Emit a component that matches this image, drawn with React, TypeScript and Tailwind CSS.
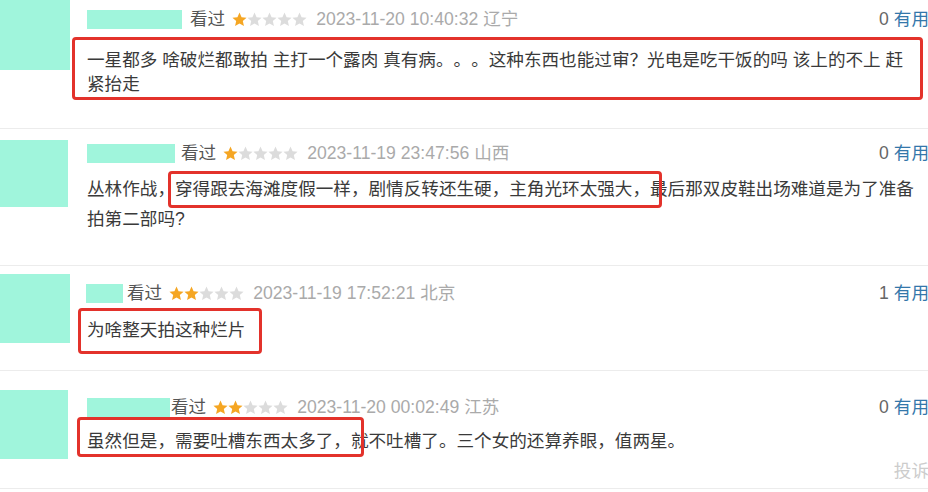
import React from "react";

const FONT = { fontFamily: '"Liberation Sans", Arial, "Noto Sans CJK SC", sans-serif' };

function Star({ on }: { on: boolean }) {
  return (
    <svg width="15" height="15" viewBox="0 0 24 24" className="block">
      <path
        d="M12 0.8l3.3 7.4 8 .8-6 5.4 1.8 7.9L12 18.2l-7.1 4.1 1.8-7.9-6-5.4 8-.8z"
        fill={on ? "#f5a623" : "#dcdcdc"}
      />
    </svg>
  );
}

function Stars({ n }: { n: number }) {
  return (
    <span className="flex items-center">
      {[0, 1, 2, 3, 4].map((i) => (
        <Star key={i} on={i < n} />
      ))}
    </span>
  );
}

function Header({
  nameW,
  nameGap,
  stars,
  date,
  place,
  useful,
}: {
  nameW: number;
  nameGap: string;
  stars: number;
  date: string;
  place: string;
  useful: number;
}) {
  return (
    <div className="flex h-[24px] items-center leading-[24px] whitespace-nowrap">
      <span className="h-[19px] bg-[#a0f5dc]" style={{ width: nameW }} />
      <span className={`${nameGap} text-[#555]`}>看过</span>
      <span className="ml-[7px]">
        <Stars n={stars} />
      </span>
      <span className="ml-[9px] text-[#aaaaaa]">
        {date} {place}
      </span>
      <span className="ml-auto -mr-[1px]">
        <span className="text-[#666]">{useful}</span>{" "}
        <span className="text-[#3377aa]">有用</span>
      </span>
    </div>
  );
}

export default function App() {
  return (
    <div
      className="relative h-[492px] w-[928px] overflow-hidden bg-white text-[17.6px] text-[#3a3a3a] [text-spacing-trim:space-all]"
      style={FONT}
    >
      {/* Row 1 */}
      <div className="relative flex h-[129px] border-b border-[#ececec]">
        <div className="w-[87px] shrink-0">
          <div className="h-[70px] w-[70px] bg-[#a0f5dc]" />
        </div>
        <div className="flex-1 pt-[7px]">
          <Header nameW={95} nameGap="ml-[8px]" stars={1} date="2023-11-20 10:40:32" place="辽宁" useful={0} />
          <div className="mt-[17px] leading-[24px] whitespace-nowrap">
            <div>一星都多 啥破烂都敢拍 主打一个露肉 真有病。。。这种东西也能过审？光电是吃干饭的吗 该上的不上 赶</div>
            <div>紧抬走</div>
          </div>
        </div>
        <div className="absolute left-[72px] top-[37px] h-[63px] w-[851px] rounded-[4px] border-[3px] border-[#e3322b]" />
      </div>

      {/* Row 2 */}
      <div className="relative flex h-[137px] border-b border-[#ececec] pt-[11px]">
        <div className="w-[87px] shrink-0">
          <div className="h-[67px] w-[68px] bg-[#a0f5dc]" />
        </div>
        <div className="flex-1 pt-[1px]">
          <Header nameW={88} nameGap="ml-[6px]" stars={1} date="2023-11-19 23:47:56" place="山西" useful={0} />
          <div className="mt-[9px] leading-[30px] whitespace-nowrap">
            <div>丛林作战，穿得跟去海滩度假一样，剧情反转还生硬，主角光环太强大，最后那双皮鞋出场难道是为了准备</div>
            <div>拍第二部吗?</div>
          </div>
        </div>
        <div className="absolute left-[168px] top-[42px] h-[37px] w-[494px] rounded-[4px] border-[3px] border-[#e3322b]" />
      </div>

      {/* Row 3 */}
      <div className="relative flex h-[105px] border-b border-[#ececec] pt-[8px]">
        <div className="w-[86px] shrink-0">
          <div className="h-[69px] w-[70px] bg-[#a0f5dc]" />
        </div>
        <div className="flex-1 pt-[7px]">
          <Header nameW={37} nameGap="ml-[4px]" stars={2} date="2023-11-19 17:52:21" place="北京" useful={1} />
          <div className="mt-[13px] pl-[1px] leading-[24px] whitespace-nowrap">为啥整天拍这种烂片</div>
        </div>
        <div className="absolute left-[78px] top-[42px] h-[46px] w-[184px] rounded-[4px] border-[3px] border-[#e3322b]" />
      </div>

      {/* Row 4 */}
      <div className="relative flex h-[118px] border-b border-[#ececec] pt-[19px]">
        <div className="w-[87px] shrink-0">
          <div className="h-[69px] w-[68px] bg-[#a0f5dc]" />
        </div>
        <div className="flex-1 pt-[5px]">
          <Header nameW={83} nameGap="ml-[1px]" stars={2} date="2023-11-20 00:02:49" place="江苏" useful={0} />
          <div className="mt-[10px] leading-[24px] whitespace-nowrap">
            虽然但是，需要吐槽东西太多了，就不吐槽了。三个女的还算养眼，值两星。
          </div>
          <div className="mt-[6px] text-right leading-[24px] text-[#cccccc] -mr-[1px]">投诉</div>
        </div>
        <div className="absolute left-[77px] top-[46px] h-[40px] w-[287px] rounded-[4px] border-[3px] border-[#e3322b]" />
      </div>
    </div>
  );
}
